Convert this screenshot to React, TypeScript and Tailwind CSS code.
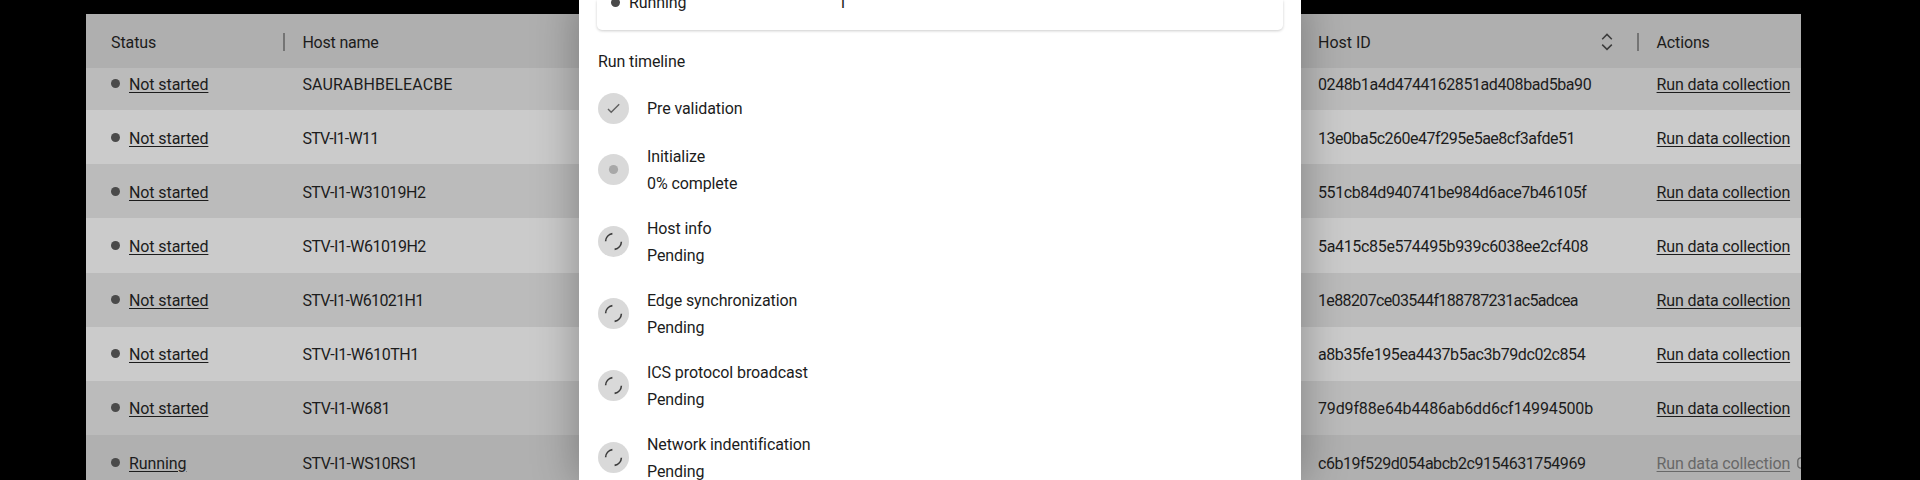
type Row = { status: string; host: string; hostTrack: string; id: string; idTrack: string };

const rows: Row[] = [
  { status: "Not started", host: "SAURABHBELEACBE", hostTrack: "tracking-[0.11px]", id: "0248b1a4d4744162851ad408bad5ba90", idTrack: "tracking-[-0.42px]" },
  { status: "Not started", host: "STV-I1-W11", hostTrack: "tracking-[-0.74px]", id: "13e0ba5c260e47f295e5ae8cf3afde51", idTrack: "tracking-[-0.49px]" },
  { status: "Not started", host: "STV-I1-W31019H2", hostTrack: "tracking-[-0.52px]", id: "551cb84d940741be984d6ace7b46105f", idTrack: "tracking-[-0.42px]" },
  { status: "Not started", host: "STV-I1-W61019H2", hostTrack: "tracking-[-0.49px]", id: "5a415c85e574495b939c6038ee2cf408", idTrack: "tracking-[-0.33px]" },
  { status: "Not started", host: "STV-I1-W61021H1", hostTrack: "tracking-[-0.64px]", id: "1e88207ce03544f188787231ac5adcea", idTrack: "tracking-[-0.63px]" },
  { status: "Not started", host: "STV-I1-W610TH1", hostTrack: "tracking-[-0.42px]", id: "a8b35fe195ea4437b5ac3b79dc02c854", idTrack: "tracking-[-0.41px]" },
  { status: "Not started", host: "STV-I1-W681", hostTrack: "tracking-[-0.44px]", id: "79d9f88e64b4486ab6dd6cf14994500b", idTrack: "tracking-[-0.14px]" },
  { status: "Running", host: "STV-I1-WS10RS1", hostTrack: "tracking-[-0.46px]", id: "c6b19f529d054abcb2c9154631754969", idTrack: "tracking-[-0.46px]" },
];

const grid = "grid grid-cols-[191.4px_1015.6px_338.6px_1fr] items-center pl-[25px] whitespace-nowrap";

function Dot() {
  return <span className="h-[9px] w-[9px] shrink-0 rounded-full bg-[#4a4a4a]" />;
}

function Separator() {
  return <span className="h-[18px] w-[2px] bg-[#747474]" />;
}

function SortIcon() {
  return (
    <svg width="12" height="18" viewBox="0 0 12 18" fill="none" stroke="#3c3c3c" strokeWidth="1.5">
      <path d="M1.2 6.2 L6 1.4 L10.8 6.2 M1.2 11.6 L6 16.4 L10.8 11.6" />
    </svg>
  );
}

function HostRow({ row, index }: { row: Row; index: number }) {
  const running = row.status === "Running";
  const first = index === 0;
  const bg = running ? "bg-[#b0b0b0]" : index % 2 === 0 ? "bg-[#bbbbbb]" : "bg-[#cbcbcb]";
  return (
    <div className={`${grid} ${bg} h-[54.15px] shrink-0 pt-[1.9px] ${first ? "-mt-[12.3px]" : ""}`}>
      <div className="flex items-center gap-[9px]">
        <span className="-mt-[2px] flex"><Dot /></span>
        <a className="tracking-[-0.1px] underline decoration-[1.4px] underline-offset-[2px]">{row.status}</a>
      </div>
      <div className={row.hostTrack}>{row.host}</div>
      <div className={row.idTrack}>{row.id}</div>
      <div className={running ? "flex gap-[7px] text-[#686868]" : "flex gap-[7px]"}>
        <a className="tracking-[-0.15px] underline decoration-[1.4px] underline-offset-[2px]">Run data collection</a>
        {running && (
          <svg className="mt-[7px] shrink-0" width="12" height="12" viewBox="0 0 12 12" fill="none" stroke="currentColor" strokeWidth="1.3">
            <rect x="0.8" y="0.8" width="10.4" height="10.4" rx="3" />
          </svg>
        )}
      </div>
    </div>
  );
}

type StepKind = "done" | "active" | "pending";

const steps: { title: string; detail?: string; kind: StepKind }[] = [
  { title: "Pre validation", kind: "done" },
  { title: "Initialize", detail: "0% complete", kind: "active" },
  { title: "Host info", detail: "Pending", kind: "pending" },
  { title: "Edge synchronization", detail: "Pending", kind: "pending" },
  { title: "ICS protocol broadcast", detail: "Pending", kind: "pending" },
  { title: "Network indentification", detail: "Pending", kind: "pending" },
];

function StepIcon({ kind }: { kind: StepKind }) {
  return (
    <svg className="mt-[0.6px] shrink-0" width="31" height="31" viewBox="0 0 31 31" fill="none">
      <circle cx="15.5" cy="15.5" r="15.5" fill="#d9d9d9" />
      {kind === "done" && <path d="M10 16 L13.2 19.3 L21.2 11.2" stroke="#606060" strokeWidth="1.4" />}
      {kind === "active" && <circle cx="15.5" cy="15.5" r="4.6" fill="#a8a8a8" />}
      {kind === "pending" && (
        <path d="M7.6 15.2 A8 8 0 0 1 14.4 7.6 M23.4 15.8 A8 8 0 0 1 16.6 23.4" stroke="#3c3c3c" strokeWidth="1.6" />
      )}
    </svg>
  );
}

export default function App() {
  return (
    <div className="relative h-[480px] w-[1920px] overflow-hidden bg-black font-[Roboto,sans-serif] text-[16px] leading-[27px] text-[#1c1c1c]">
      <div className="flex h-full pl-[86px] pt-[14px]">
        <div className="flex h-[466px] w-[1715px] flex-col overflow-hidden">
          <div className={`${grid} z-10 h-[54.3px] shrink-0 bg-[#afafaf] pt-[2px]`}>
            <div className="flex items-center justify-between pr-[17.4px]">
              <span className="tracking-[-0.1px]">Status</span>
              <Separator />
            </div>
            <div className="tracking-[-0.2px]">Host name</div>
            <div className="flex items-center pr-[17.6px]">
              <span className="flex-1">Host ID</span>
              <SortIcon />
              <span className="ml-[24px] flex"><Separator /></span>
            </div>
            <div className="tracking-[-0.15px]">Actions</div>
          </div>
          {rows.map((row, i) => (
            <HostRow key={row.id} row={row} index={i} />
          ))}
        </div>
      </div>

      <div className="absolute left-[579px] top-0 z-20 h-[480px] w-[722px] bg-white px-[18px] shadow-[0_0_40px_4px_rgba(0,0,0,0.28)]">
        <div className="flex h-[30px] items-start rounded-b-[5px] pl-[14px] shadow-[0_1px_3px_rgba(0,0,0,0.2)]">
          <div className="-mt-[11px] flex w-[227px] items-center gap-[9px]">
            <span className="flex"><Dot /></span>
            <span className="tracking-[-0.1px]">Running</span>
          </div>
          <div className="-mt-[11px]">1</div>
        </div>
        <div className="mt-[18px] pl-[1px] tracking-[-0.1px]">Run timeline</div>
        <div className="mt-[17.3px] flex flex-col gap-[18.1px] pl-px tracking-[-0.09px]">
          {steps.map((step) => (
            <div key={step.title} className="flex items-center gap-[18px]">
              <StepIcon kind={step.kind} />
              <div className={step.detail ? "-mb-px pt-px" : ""}>
                <div>{step.title}</div>
                {step.detail && <div>{step.detail}</div>}
              </div>
            </div>
          ))}
        </div>
      </div>
    </div>
  );
}
